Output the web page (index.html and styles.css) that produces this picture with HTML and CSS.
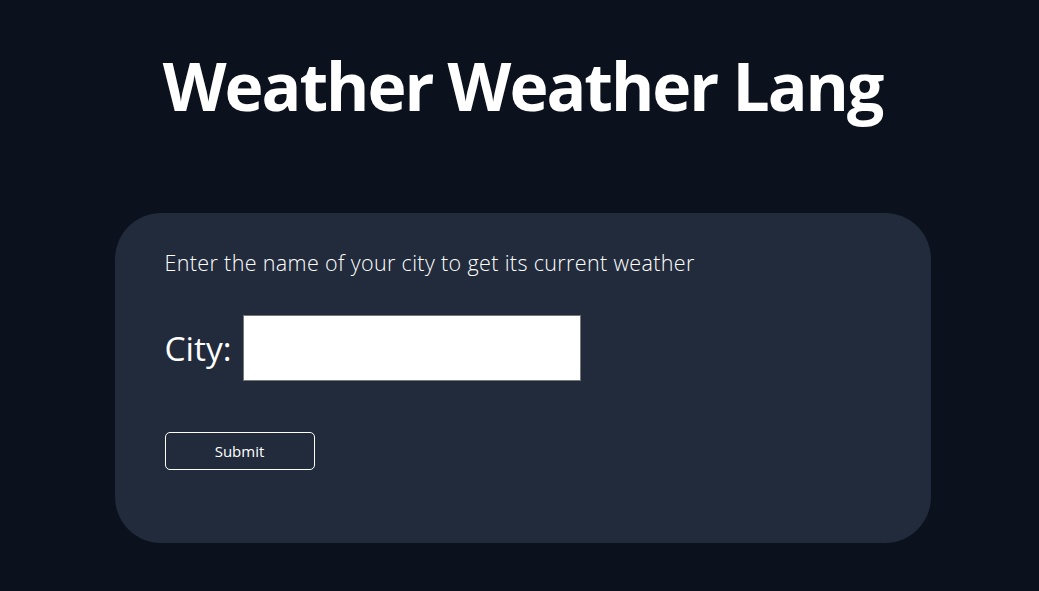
FILE: index.html
```html
<!DOCTYPE html>
<html lang="en">
<head>
<meta charset="utf-8">
<title>Weather Weather Lang</title>
<link rel="stylesheet" href="styles.css">
</head>
<body>
<main class="page">
  <h1 class="title">Weather Weather Lang</h1>
  <section class="card">
    <p class="intro">Enter the name of your city to get its current weather</p>
    <form class="form">
      <div class="field">
        <label class="label" for="city">City:</label>
        <input class="input" id="city" type="text">
      </div>
      <button class="submit" type="button">Submit</button>
    </form>
  </section>
</main>
</body>
</html>
```
FILE: styles.css
```css
html, body {
  margin: 0;
  padding: 0;
  background: #0b121e;
  color: #ffffff;
  font-family: "Open Sans", "Noto Sans", sans-serif;
}
.page {
  padding: 0 0 0 6px;
  display: flex;
  flex-direction: column;
  align-items: center;
}
.title {
  margin: 45px 0 0;
  font-size: 66px;
  font-weight: 700;
  line-height: 80px;
  letter-spacing: -2px;
}
.card {
  box-sizing: border-box;
  width: 816px;
  height: 330px;
  margin-top: 88px;
  background: #212b3b;
  border-radius: 46px;
  padding: 36px 50px;
}
.intro {
  margin: 0;
  font-size: 21.5px;
  font-weight: 300;
  line-height: 28px;
  letter-spacing: 0.35px;
}
.form {
  margin: 0;
}
.field {
  display: flex;
  align-items: center;
  gap: 11px;
  margin-top: 38px;
}
.label {
  font-size: 33.5px;
  font-weight: 400;
}
.input {
  box-sizing: border-box;
  width: 338px;
  height: 66px;
  border: 1px solid #767676;
  background: #fff;
  margin: 0;
}
.submit {
  display: block;
  box-sizing: border-box;
  margin-top: 51px;
  width: 150px;
  height: 38px;
  background: transparent;
  border: 1px solid #ffffff;
  border-radius: 5px;
  color: #fff;
  font-family: inherit;
  font-size: 15px;
}
```
